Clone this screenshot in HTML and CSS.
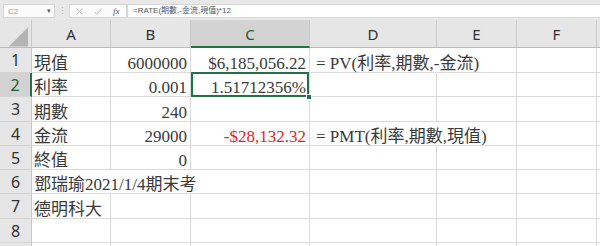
FILE: index.html
```html
<!doctype html>
<html lang="zh-Hant">
<head>
    <meta charset="UTF-8">
    <meta name="viewport" content="width=device-width, initial-scale=1.0">
    <title>期末考</title>
    <link rel="stylesheet" href="styles.css">
</head>
<body>
<div class="formula-bar">
    <div class="name-box">
        <span class="ref">C2</span>
        <span class="drop">&#9662;</span>
    </div>
    <div class="grip">&#8942;</div>
    <div class="fx-box">
        <svg class="icon" width="7" height="7" viewBox="0 0 7 7"><path d="M0.5 0.5 L6.5 6.5 M6.5 0.5 L0.5 6.5" stroke="#b8b8b8" stroke-width="1" fill="none"/></svg>
        <svg class="icon" width="8" height="7" viewBox="0 0 8 7"><path d="M0.5 4 L2.8 6.3 L7.5 0.8" stroke="#b8b8b8" stroke-width="1" fill="none"/></svg>
        <span class="fx">fx</span>
    </div>
    <div class="formula-input">=RATE(期數,-金流,現值)*12</div>
</div>

<div class="sheet">
    <div class="row head">
        <div class="corner">
            <svg width="32" height="27" viewBox="0 0 32 27"><polygon points="29,7 29,27 9,27" fill="#b4b4b4"/></svg>
        </div>
        <div class="col">A</div>
        <div class="col">B</div>
        <div class="col sel">C</div>
        <div class="col">D</div>
        <div class="col">E</div>
        <div class="col">F</div>
        <div class="col rest"></div>
    </div>
    <div class="row tall">
        <div class="rh">1</div>
        <div class="cell">現值</div>
        <div class="cell num">6000000</div>
        <div class="cell num">$6,185,056.22</div>
        <div class="cell spill-r note">= PV(利率,期數,-金流)</div>
        <div class="cell"></div>
        <div class="cell"></div>
        <div class="cell"></div>
    </div>
    <div class="row">
        <div class="rh sel">2</div>
        <div class="cell">利率</div>
        <div class="cell num">0.001</div>
        <div class="cell num active">1.51712356%</div>
        <div class="cell"></div>
        <div class="cell"></div>
        <div class="cell"></div>
        <div class="cell"></div>
    </div>
    <div class="row tall">
        <div class="rh">3</div>
        <div class="cell">期數</div>
        <div class="cell num">240</div>
        <div class="cell"></div>
        <div class="cell"></div>
        <div class="cell"></div>
        <div class="cell"></div>
        <div class="cell"></div>
    </div>
    <div class="row">
        <div class="rh">4</div>
        <div class="cell">金流</div>
        <div class="cell num">29000</div>
        <div class="cell num neg">-$28,132.32</div>
        <div class="cell spill-r note">= PMT(利率,期數,現值)</div>
        <div class="cell"></div>
        <div class="cell"></div>
        <div class="cell"></div>
    </div>
    <div class="row">
        <div class="rh">5</div>
        <div class="cell">終值</div>
        <div class="cell num">0</div>
        <div class="cell"></div>
        <div class="cell"></div>
        <div class="cell"></div>
        <div class="cell"></div>
        <div class="cell"></div>
    </div>
    <div class="row">
        <div class="rh">6</div>
        <div class="cell spill-r">鄧瑞瑜2021/1/4期末考</div>
        <div class="cell spill-r"></div>
        <div class="cell"></div>
        <div class="cell"></div>
        <div class="cell"></div>
        <div class="cell"></div>
        <div class="cell"></div>
    </div>
    <div class="row tall">
        <div class="rh">7</div>
        <div class="cell">德明科大</div>
        <div class="cell"></div>
        <div class="cell"></div>
        <div class="cell"></div>
        <div class="cell"></div>
        <div class="cell"></div>
        <div class="cell"></div>
    </div>
    <div class="row">
        <div class="rh">8</div>
        <div class="cell"></div>
        <div class="cell"></div>
        <div class="cell"></div>
        <div class="cell"></div>
        <div class="cell"></div>
        <div class="cell"></div>
        <div class="cell"></div>
    </div>
    <div class="row">
        <div class="rh"></div>
        <div class="cell"></div>
        <div class="cell"></div>
        <div class="cell"></div>
        <div class="cell"></div>
        <div class="cell"></div>
        <div class="cell"></div>
        <div class="cell"></div>
    </div>
</div>
</body>
</html>
```

FILE: styles.css
```css
body {
    margin: 0;
    padding: 0;
    width: 600px;
    height: 246px;
    overflow: hidden;
    background: #ffffff;
    font-family: "Liberation Serif", "Noto Sans CJK TC", serif;
}

/* formula bar */
.formula-bar {
    height: 20px;
    background: #e8e8e8;
    display: flex;
    align-items: flex-start;
    padding-top: 4px;
    box-sizing: border-box;
    font-family: "Liberation Sans", "Noto Sans CJK TC", sans-serif;
}
.name-box {
    margin-left: 3px;
    width: 52px;
    height: 14px;
    background: #fbfbfb;
    border: 1px solid #d6d6d6;
    box-sizing: border-box;
    display: flex;
    align-items: center;
    justify-content: space-between;
    padding: 0 3px 0 4px;
}
.ref {
    font-size: 8px;
    color: #9a9a9a;
}
.drop {
    font-size: 7px;
    color: #555555;
}
.grip {
    width: 14px;
    text-align: center;
    font-size: 9px;
    line-height: 14px;
    color: #a8a8a8;
}
.fx-box {
    width: 58px;
    height: 14px;
    background: #fbfbfb;
    border: 1px solid #d6d6d6;
    box-sizing: border-box;
    display: flex;
    align-items: center;
    gap: 11px;
    padding-left: 6px;
}
.fx {
    font-family: "Liberation Serif", serif;
    font-style: italic;
    font-size: 9px;
    color: #555555;
}
.formula-input {
    flex: 1;
    height: 14px;
    background: #ffffff;
    border: 1px solid #d6d6d6;
    border-right: none;
    box-sizing: border-box;
    padding-left: 5px;
    font-family: "Liberation Sans", "Noto Sans CJK TC", sans-serif;
    font-size: 8px;
    line-height: 12px;
    color: #555555;
}

/* sheet grid */
.sheet {
    display: flex;
    flex-direction: column;
    height: 226px;
    overflow: hidden;
}
.row {
    display: grid;
    grid-template-columns: 32px 79px 80px 119px 127px 80px 80px 1fr;
    height: 24px;
    flex-shrink: 0;
}
.row.tall {
    height: 25px;
}
.row.head {
    height: 28px;
    background: #e6e6e6;
}
.corner {
    border-right: 1px solid #c8c8c8;
    border-bottom: 1px solid #bcbcbc;
    display: flex;
}
.col {
    border-right: 1px solid #cacaca;
    border-bottom: 1px solid #bcbcbc;
    display: flex;
    align-items: center;
    justify-content: center;
    font-family: "Noto Sans", sans-serif;
    font-size: 15px;
    color: #333333;
    padding-top: 1px;
}
.col.sel {
    background: #d3d3d3;
    border-bottom: 2px solid #217346;
    color: #1d5c38;
}
.col.rest {
    border-right: none;
}
.rh {
    background: #e6e6e6;
    border-right: 1px solid #c8c8c8;
    border-bottom: 1px solid #d4d4d4;
    display: flex;
    align-items: center;
    justify-content: center;
    font-family: "Noto Sans", sans-serif;
    font-size: 16px;
    color: #333333;
}
.rh.sel {
    background: #d3d3d3;
    border-right: 2px solid #217346;
    color: #1d5c38;
}
.cell {
    min-width: 0;
    border-right: 1px solid #dadada;
    border-bottom: 1px solid #dadada;
    display: flex;
    align-items: flex-end;
    padding: 0 3px 0 2px;
    white-space: nowrap;
    font-size: 17px;
    line-height: 16px;
    color: #3a3a3a;
}
.cell.num {
    justify-content: flex-end;
}
.cell.neg {
    color: #e3231f;
}
.cell.note {
    padding-left: 6px;
}
.cell.spill-r {
    border-right-color: transparent;
}
.cell.active {
    position: relative;
}
.cell.active::after {
    content: "";
    position: absolute;
    left: 0;
    top: -1px;
    right: 0;
    bottom: -1px;
    border: 2px solid #217346;
    z-index: 2;
}
.cell.active::before {
    content: "";
    position: absolute;
    right: -3px;
    bottom: -4px;
    width: 4px;
    height: 4px;
    background: #217346;
    border: 1px solid #ffffff;
    z-index: 3;
}
```
